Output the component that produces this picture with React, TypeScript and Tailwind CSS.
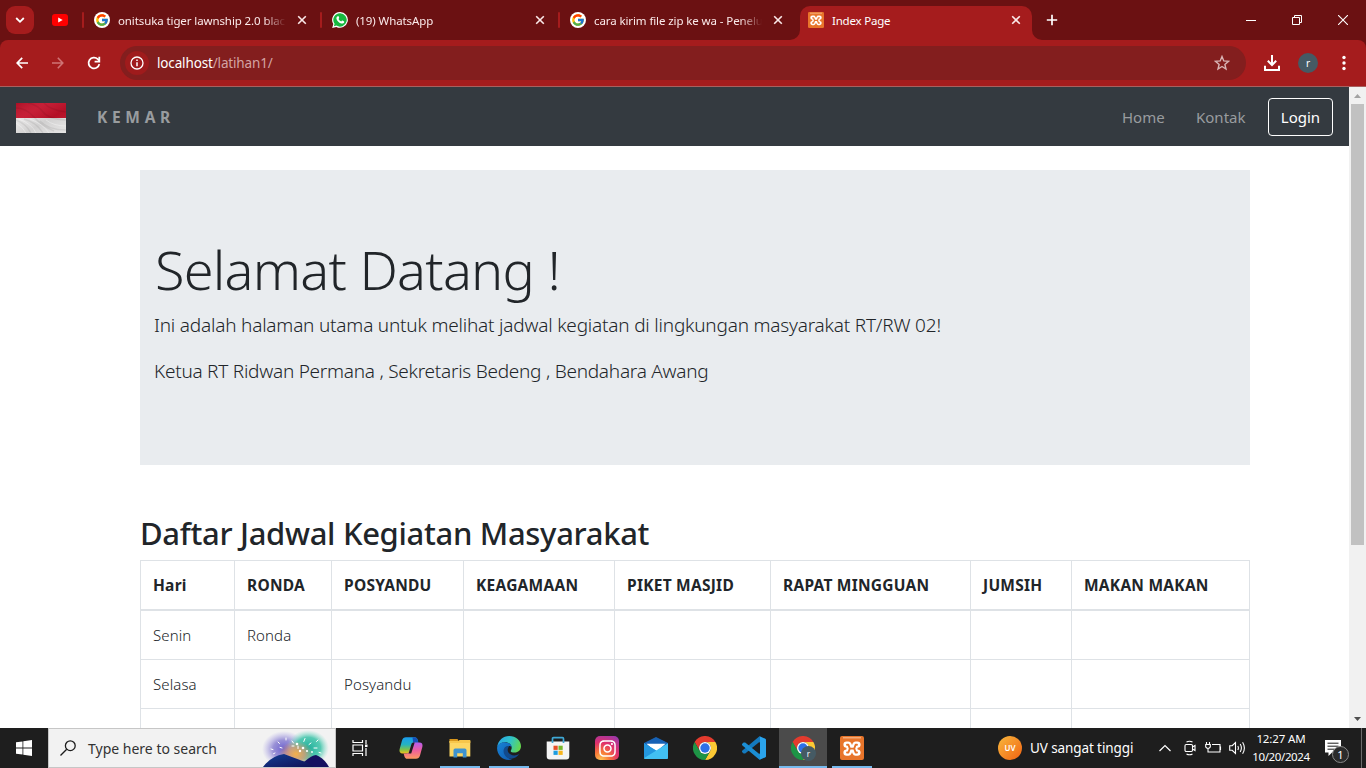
import React from "react";
import { FcGoogle } from "react-icons/fc";
import { FaInstagram } from "react-icons/fa";

const GoogleIcon = () => (
  <span className="flex size-4 shrink-0 items-center justify-center rounded-full bg-white">
    <FcGoogle className="size-[14px]" />
  </span>
);

const WhatsAppIcon = () => (
  <svg viewBox="0 0 16 16" className="size-4 shrink-0">
    <path d="M8.100 0A7.900 7.900 0 1 1 4.300 14.900L.2 16l1.100-4A7.900 7.900 0 0 1 8.100 0Z" fill="#fff" />
    <path d="M8.100 1.200A6.700 6.700 0 1 1 4.500 13.600L1.900 14.300l.7-2.500A6.700 6.700 0 0 1 8.100 1.200Z" fill="#17b83f" />
    <path d="M5.700 4.200c.6-.3.9 0 1.100.6l.4 1c.1.400-.3.800-.7 1.200.6 1.200 1.500 2 2.800 2.500.4-.4.7-1.100 1.200-.9l1.300.6c.5.300.5.600.3 1.200-.4.900-1.600 1.400-2.600 1.100C7 10.800 5.200 9 4.500 6.900c-.3-1 .3-2.300 1.200-2.700Z" fill="#fff" />
  </svg>
);

const XamppIcon = ({ small }: { small?: boolean }) => (
  <svg viewBox="0 0 24 24" className={small ? "size-4 shrink-0" : "size-6 shrink-0"}>
    <rect width="24" height="24" rx="2" fill="#e8752b" />
    <path d="M3 1.800h18" stroke="#f6b98c" strokeWidth="1.200" />
    <g fill="none" strokeLinecap="round" strokeLinejoin="round">
      <path d="M6.600 8.600h1.800l1.600 4-1.600 4H6.600M17.400 8.600h-1.800l-1.600 4 1.600 4h1.800M10 12.600h4" stroke="#fff" strokeWidth="6.400" />
      <path d="M7 8.700h1.400l1.400 3.900-1.400 3.900H7M17 8.700h-1.400l-1.400 3.900 1.400 3.900H17M9.800 12.600h4.400" stroke="#e8752b" strokeWidth="1.900" />
    </g>
  </svg>
);

const Close = () => (
  <svg viewBox="0 0 10 10" className="size-[10px] shrink-0" fill="none" stroke="#fbe9e9" strokeWidth="1.6">
    <path d="M1.2 1.2l7.6 7.6M8.8 1.2L1.2 8.8" />
  </svg>
);

const TabDivider = () => <span className="h-4 w-[2px] shrink-0 rounded bg-[#a51c1d]" />;

const Chrome = () => (
  <svg viewBox="0 0 48 48" className="size-6">
    <path d="M24 12H44.8A24 24 0 0 0 3.2 12L13.6 30A12 12 0 0 1 24 12Z" fill="#e33b2e" />
    <path d="M44.8 12A24 24 0 0 1 24 48L34.4 30A12 12 0 0 0 24 12Z" fill="#fcc934" />
    <path d="M3.2 12A24 24 0 0 0 24 48L34.4 30A12 12 0 0 1 13.6 30Z" fill="#1e9446" />
    <circle cx="24" cy="24" r="12" fill="#fff" />
    <circle cx="24" cy="24" r="9.4" fill="#2c70e8" />
  </svg>
);

const Copilot = () => (
  <svg viewBox="0 0 24 24" className="size-6">
    <defs>
      <linearGradient id="cpA" x1="0" y1="0" x2="0" y2="1">
        <stop offset="0" stopColor="#1a9df0" />
        <stop offset=".45" stopColor="#25b3c0" />
        <stop offset=".75" stopColor="#7cc24c" />
        <stop offset="1" stopColor="#f2c21a" />
      </linearGradient>
      <linearGradient id="cpB" x1="0" y1="0" x2="0" y2="1">
        <stop offset="0" stopColor="#b55cf0" />
        <stop offset=".5" stopColor="#f0609b" />
        <stop offset="1" stopColor="#ff9a5e" />
      </linearGradient>
    </defs>
    <path d="M7 1.2h8.6c1.7 0 2.6 1.1 3 2.6l.8 2.7h-2.6c-1.7 0-2.5.8-3 2.3l-2 6.3c-.5 1.6-1.4 2.4-3 2.4H3.600c-2.400 0-3.600-1.600-3-4.200L3 4.500C3.700 2.300 5 1.200 7 1.200Z" fill="url(#cpA)" />
    <path d="M13.500 1.200h2.100c1.700 0 2.600 1.100 3 2.600l.8 2.700h-2.600c-1.200 0-2 .5-2.500 1.300Z" fill="#1650b8" />
    <path d="M17 22.800H8.400c-1.700 0-2.600-1.100-3-2.600l-.8-2.700h2.600c1.700 0 2.500-.8 3-2.300l2-6.300c.5-1.600 1.400-2.400 3-2.400h5.200c2.400 0 3.600 1.600 3 4.200L21 19.500c-.7 2.200-2 3.300-4 3.300Z" fill="url(#cpB)" />
    <path d="M12.600 7.600 14 6.500h1.700l-3.500 11h-2.900c.5-.6.800-1.300 1-2.300Z" fill="#1e1e1e" />
  </svg>
);

const Explorer = () => (
  <svg viewBox="0 0 24 24" className="size-6">
    <path d="M1.500 3h8l1.500 2.500H1.500Z" fill="#d9971c" />
    <path d="M1.500 5h20.800v15.500H1.500Z" fill="#fdd663" />
    <path d="M1.500 5h9l1-1h10.800v3H1.500Z" fill="#f7c64b" />
    <path d="M5.500 21.500v-7.300q0-1.700 1.700-1.700h9.600q1.700 0 1.700 1.700v7.300h-3.700v-4.300h-5.600v4.300Z" fill="#3f93cf" />
  </svg>
);

const Edge = () => (
  <svg viewBox="0 0 24 24" className="size-6">
    <defs>
      <linearGradient id="egT" x1="0" y1=".3" x2="1" y2=".6">
        <stop offset="0" stopColor="#2aa7e6" />
        <stop offset=".5" stopColor="#2fc3c9" />
        <stop offset="1" stopColor="#66d84b" />
      </linearGradient>
      <linearGradient id="egB" x1="0" y1="0" x2="1" y2="1">
        <stop offset="0" stopColor="#1784d8" />
        <stop offset="1" stopColor="#1159ad" />
      </linearGradient>
    </defs>
    <path d="M.2 11C1 4.500 6 0 12.200 0 19 0 24 4.800 24 10.300c0 3.800-2.900 6.300-6.300 6.300-2.500 0-4-.8-4-1.700 0-.7 1-1.300 1-3.200C14.700 8.500 11.500 6.300 8 6.300 4.600 6.300 1.600 8 .2 11Z" fill="url(#egT)" />
    <path d="M.1 12C.3 8.500 3.600 6.200 7.500 6.200c4 0 7.100 2.300 7.200 5.200-1-1.300-2-1.600-3.300-1.400-3.400.7-4.600 4-3.400 7.200 1.200 3.300 4 5.900 7.200 6.300C7 25.800-.1 19.600.1 12Z" fill="url(#egB)" />
    <path d="M8.600 10.700c-2.700 2-2.700 6.100-.2 9.200 3.300 4 9.600 4.100 13.900-1.800-4 2.300-9.200 1.500-11-1.800-1.100-2-.8-4.200.8-6.100-1.300-.6-2.400-.2-3.500.5Z" fill="#124a8c" />
  </svg>
);

const Store = () => (
  <svg viewBox="0 0 24 24" className="size-6">
    <path d="M.7 5.500h22.600v15q0 3-3 3H3.700q-3 0-3-3Z" fill="#f4f4f4" />
    <path d="M6.500 7V2.800Q6.500 1.700 7.600 1.700h8.800q1.100 0 1.100 1.100V7" fill="none" stroke="#3fa9d6" strokeWidth="1.700" />
    <path d="M7.500 9.700h4.200v4.200H7.500Z" fill="#e64f27" />
    <path d="M12.500 9.700h4.200v4.200h-4.200Z" fill="#77b82a" />
    <path d="M7.500 14.700h4.200v4.200H7.500Z" fill="#1e9de0" />
    <path d="M12.500 14.700h4.200v4.200h-4.200Z" fill="#f8b51c" />
  </svg>
);

const Mail = () => (
  <svg viewBox="0 0 24 24" className="size-6">
    <path d="M0 7 12 1l12 6v6H0Z" fill="#1762b5" />
    <path d="M2.500 7.700h19L12 16Z" fill="#fff" />
    <path d="M0 7.200 24 21.500q0 1.500-1.500 1.500h-21Q0 23 0 21.500Z" fill="#2ba5e8" />
    <path d="M24 7.200 0 22q.3 1 1.500 1h21q1.500 0 1.500-1.500Z" fill="#42c0f2" />
    <path d="m0 7.200 12 7.200L0 22Z" fill="#2497df" />
  </svg>
);

const VsCode = () => (
  <svg viewBox="0 0 24 24" className="size-6">
    <path d="M17.500.3 24 3v4.500L17 6.300 3.200 17.500 1.600 17.600 0 16q-.2-.8.400-1.400Z" fill="#1479bd" />
    <path d="M17.500 23.700 24 21v-4.500l-7 1.200L3.200 6.500 1.600 6.400 0 8q-.2.8.4 1.400Z" fill="#1b8ed4" />
    <path d="m17.500.3 5.400 2.500Q24 3.300 24 4.500v15q0 1.200-1.100 1.700l-5.400 2.500q.5-.4.500-1.400V1.700q0-1-.5-1.400Z" fill="#2ba4ec" />
  </svg>
);

const Fireworks = () => (
  <svg viewBox="0 0 68 38" className="h-[38px] w-[68px]">
    <defs>
      <radialGradient id="fwA"><stop offset="0" stopColor="#6b60d0" /><stop offset=".5" stopColor="#8379cf" stopOpacity=".8" /><stop offset="1" stopColor="#a79ee8" stopOpacity="0" /></radialGradient>
      <radialGradient id="fwB"><stop offset="0" stopColor="#1faf9c" /><stop offset=".6" stopColor="#45c6ac" stopOpacity=".9" /><stop offset="1" stopColor="#90dfcf" stopOpacity="0" /></radialGradient>
      <radialGradient id="fwC"><stop offset="0" stopColor="#f4b04a" /><stop offset=".5" stopColor="#d99b70" stopOpacity=".8" /><stop offset="1" stopColor="#d99b70" stopOpacity="0" /></radialGradient>
      <linearGradient id="fwM" x1="0" y1="0" x2="1" y2="1"><stop offset="0" stopColor="#123f94" /><stop offset="1" stopColor="#101055" /></linearGradient>
    </defs>
    <ellipse cx="22" cy="20" rx="22" ry="18" fill="url(#fwA)" />
    <ellipse cx="46" cy="19" rx="21" ry="18" fill="url(#fwB)" />
    <ellipse cx="34" cy="25" rx="17" ry="13" fill="url(#fwC)" />
    <path d="m9 20 2 .6M16 13l1.500 1.500M24 9v2M13 24l-1.500.7M20 19l-2-.6M30 12l1.500 2M43 9.500l-1.200 3M49 14l-2 1.500M55 19h-3M56 11l-1.500 1.500M59 24l-2-.6M36 17v2.500M30 17h2" stroke="#fff" strokeLinecap="round" />
    <g fill="#fff"><circle cx="35" cy="15" r="1.300" /><circle cx="41" cy="19" r="1.300" /><circle cx="45" cy="22" r="1.100" /><circle cx="38" cy="22" r="1.200" /><circle cx="50" cy="23" r=".9" /></g>
    <path d="M42 33q8-7 12-7 8 3 13 12H40Z" fill="#151060" />
    <path d="M1 38Q9 27 22 25q13 5 22 8l8 5Z" fill="url(#fwM)" />
  </svg>
);

const Flag = () => (
  <svg viewBox="0 0 50 30" className="h-[30px] w-[50px]" preserveAspectRatio="none">
    <defs>
      <linearGradient id="flG" x1="0" y1="0" x2="1" y2="1">
        <stop offset="0" stopColor="#000" stopOpacity=".12" />
        <stop offset=".3" stopColor="#fff" stopOpacity=".06" />
        <stop offset=".6" stopColor="#000" stopOpacity=".08" />
        <stop offset="1" stopColor="#fff" stopOpacity=".06" />
      </linearGradient>
    </defs>
    <path d="M0 0h50v15H0Z" fill="#c3112a" />
    <path d="M0 15h50v15H0Z" fill="#e4e3e3" />
    <path d="M0 0h50v30H0Z" fill="url(#flG)" />
    <g fill="none" stroke="#000" strokeOpacity=".07" strokeWidth="1.500">
      <path d="M0 5q10 0 18 9t20 14M12 0q10 2 15 9t23 8M28 0q6 7 22 9M0 17q10 4 15 13M8 16q12 3 19 14M24 18q8 9 26 9" />
    </g>
    <path d="M0 20q7 4 10 10M14 16q13 5 19 14M30 17q8 6 20 6M3 16q13 5 17 14" fill="none" stroke="#fff" strokeOpacity=".35" />
  </svg>
);

const Tab = ({ icon, label }: { icon: React.ReactNode; label: string }) => (
  <div className="flex h-4 w-[236px] shrink-0 items-center pl-[10px]">
    {icon}
    <span className="mt-px ml-2 w-[168px] shrink-0 overflow-hidden whitespace-nowrap [mask-image:linear-gradient(to_right,#000_146px,transparent_168px)] text-[11.5px] leading-4 tracking-[-0.1px] text-[#fbeaea]">
      {label}
    </span>
    <span className="ml-[11px] flex">
      <Close />
    </span>
  </div>
);

const columns = [
  { label: "Hari", w: "w-[94px]" },
  { label: "RONDA", w: "w-[97px]" },
  { label: "POSYANDU", w: "w-[132px]" },
  { label: "KEAGAMAAN", w: "w-[151px]" },
  { label: "PIKET MASJID", w: "w-[156px]" },
  { label: "RAPAT MINGGUAN", w: "w-[200px]" },
  { label: "JUMSIH", w: "w-[101px]" },
  { label: "MAKAN MAKAN", w: "w-[178px]" },
];
const rows = [
  ["Senin", "Ronda", "", "", "", "", "", ""],
  ["Selasa", "", "Posyandu", "", "", "", "", ""],
  ["Rabu", "", "", "", "", "", "", ""],
];

const Slot = ({ children, state }: { children: React.ReactNode; state?: "open" | "active" }) => (
  <div className={state === "active" ? "mr-px flex h-10 w-12 shrink-0 flex-col items-center bg-[#4b4b4b] pt-2" : "mr-px flex h-10 w-12 shrink-0 flex-col items-center pt-2"}>
    {children}
    {state && <span className={state === "active" ? "mt-[6px] h-[2px] w-12 bg-[#76b9ed]" : "mt-[6px] h-[2px] w-10 bg-[#76b9ed]"} />}
  </div>
);

export default function App() {
  return (
    <div className="flex h-[768px] w-[1366px] flex-col overflow-hidden bg-white font-['Noto_Sans','Open_Sans',sans-serif] text-[#212529]">
      <div className="flex h-10 shrink-0 items-center bg-[#6b1112]">
        <div className="ml-[6px] flex size-7 shrink-0 items-center justify-center rounded-[9px] bg-[#a51c1d]">
          <svg viewBox="0 0 10 10" className="size-[10px]" fill="none" stroke="#fff" strokeWidth="1.800"><path d="m1.200 3 3.800 3.800L8.800 3" /></svg>
        </div>
        <svg viewBox="0 0 16 12" className="ml-[18px] h-3 w-4 shrink-0"><rect width="16" height="12" rx="3" fill="#f00" /><path d="M6.200 3.400v5.200L10.700 6Z" fill="#fff" /></svg>
        <div className="ml-[14px] flex items-center">
          <TabDivider />
          <Tab icon={<GoogleIcon />} label="onitsuka tiger lawnship 2.0 black" />
          <TabDivider />
          <Tab icon={<WhatsAppIcon />} label="(19) WhatsApp" />
          <TabDivider />
          <Tab icon={<GoogleIcon />} label="cara kirim file zip ke wa - Penelusuran" />
        </div>
        <svg viewBox="0 0 10 10" className="ml-[-6px] size-[10px] shrink-0 self-end"><path d="M10 0v10H0A10 10 0 0 0 10 0Z" fill="#a51c1d" /></svg>
        <div className="flex h-[34px] w-[232px] shrink-0 items-center self-end rounded-t-[10px] bg-[#a51c1d] pb-[6px] pl-2">
          <XamppIcon small />
          <span className="mt-px ml-2 w-[179px] text-[11.5px] leading-4 tracking-[-0.2px] text-white">Index Page</span>
          <Close />
        </div>
        <svg viewBox="0 0 10 10" className="size-[10px] shrink-0 self-end"><path d="M0 0v10h10A10 10 0 0 1 0 0Z" fill="#a51c1d" /></svg>
        <svg viewBox="0 0 12 12" className="ml-1 size-3 shrink-0" fill="none" stroke="#fff" strokeWidth="1.700"><path d="M6 .8v10.400M.8 6h10.400" /></svg>
        <div className="ml-auto flex shrink-0">
          <span className="flex w-[46px] justify-center"><svg viewBox="0 0 10 10" className="size-[10px]" stroke="#fff"><path d="M0 5.500h10" /></svg></span>
          <span className="flex w-[46px] justify-center"><svg viewBox="0 0 10 10" className="size-[10px]" fill="none" stroke="#fff"><path d="M.5 2.500h7v7h-7ZM2.500 2.500v-2h7v7h-2" /></svg></span>
          <span className="flex w-[46px] justify-center"><svg viewBox="0 0 10 10" className="size-[10px]" fill="none" stroke="#fff" strokeWidth="1.100"><path d="m0 0 10 10M10 0 0 10" /></svg></span>
        </div>
      </div>

      <div className="h-[47px] shrink-0 bg-[#6b1112]">
        <div className="flex h-[47px] items-center rounded-t-[8px] border-b border-[#a8605f] bg-[#a51c1d]">
          <svg viewBox="0 0 12 12" className="ml-4 size-3" fill="none" stroke="#fff" strokeWidth="1.700"><path d="M12 6H1.200M6.200.8 1.200 6l5 5.200" /></svg>
          <svg viewBox="0 0 12 12" className="ml-6 size-3" fill="none" stroke="#cf7475" strokeWidth="1.600"><path d="M0 6h10.800M5.800.8l5 5.200-5 5.200" /></svg>
          <svg viewBox="0 0 14 14" className="ml-[23px] size-[14px]" fill="none" stroke="#fff" strokeWidth="1.800"><path d="M12.300 8.100A5.400 5.400 0 1 1 10.800 3.200L12.200 4.700" /><path d="M12.300.8v4.800H7.600" /></svg>
          <div className="ml-[19px] flex h-[34px] w-[1126px] items-center rounded-full bg-[#831e1e]">
            <span className="ml-[5px] flex size-6 items-center justify-center rounded-full bg-[#9f1b1c]">
              <svg viewBox="0 0 14 14" className="size-[14px]" fill="none" stroke="#fff" strokeWidth="1.300"><circle cx="7" cy="7" r="6" /><path d="M7 6.200v4M7 3.600v1.400" strokeWidth="1.500" /></svg>
            </span>
            <span className="ml-2 text-[13.5px] leading-5 tracking-[-0.15px] text-white">localhost<span className="text-[#d3a3a3]">/latihan1/</span></span>
            <svg viewBox="0 0 16 16" className="mr-4 ml-auto size-4" fill="none" stroke="#d9b4b4" strokeWidth="1.400"><path d="m8 1.500 1.800 4.400 4.700.4-3.600 3.100 1.100 4.600L8 11.500 4 14l1.100-4.600L1.500 6.300l4.700-.4Z" /></svg>
          </div>
          <svg viewBox="0 0 16 16" className="ml-[18px] size-4" fill="none" stroke="#fff" strokeWidth="2"><path d="M8 0v9.500M3.800 5.800 8 10l4.200-4.200M1 10.800V15h14v-4.200" /></svg>
          <span className="ml-[18px] flex size-5 items-center justify-center rounded-full bg-[#455a64] text-[10px] leading-none text-white">r</span>
          <svg viewBox="0 0 4 16" className="ml-6 h-4 w-1" fill="#fff"><circle cx="2" cy="2.500" r="1.700" /><circle cx="2" cy="8" r="1.700" /><circle cx="2" cy="13.500" r="1.700" /></svg>
        </div>
      </div>

      <div className="flex h-[641px] shrink-0">
        <div className="h-[641px] w-[1349px] overflow-hidden">
          <nav className="flex h-[59px] items-center bg-[#343a40] pr-4 pl-4 text-[15px]">
            <span className="mt-[3px]"><Flag /></span>
            <span className="mt-px ml-[31px] text-[15.500px] leading-6 font-bold tracking-[4.700px] text-[#999c9f]">KEMAR</span>
            <span className="mt-px ml-auto w-[74px] leading-6 text-[#999c9f]">Home</span>
            <span className="mt-px w-[72px] leading-6 text-[#999c9f]">Kontak</span>
            <span className="mt-px flex h-[38px] w-[65px] items-center justify-center rounded-[4px] border border-white text-white">Login</span>
          </nav>
          <main className="ml-[140px] w-[1110px] pt-6">
            <section className="h-[295px] bg-[#e9ecef] pt-16 pl-[14px]">
              <h1 className="h-[80px] pl-px text-[54px] leading-[71px] font-[260] tracking-[-0.75px] whitespace-nowrap">Selamat Datang !</h1>
              <p className="h-[46px] text-[19px] leading-[23px] font-[270] tracking-[-0.2px] whitespace-nowrap">Ini adalah halaman utama untuk melihat jadwal kegiatan di lingkungan masyarakat RT/RW 02!</p>
              <p className="text-[19px] leading-[23px] font-[270] tracking-[-0.25px] whitespace-nowrap">Ketua RT Ridwan Permana , Sekretaris Bedeng , Bendahara Awang</p>
            </section>
            <h2 className="mt-[47px] h-12 text-[31px] leading-[42px] font-medium tracking-[-0.32px] whitespace-nowrap">Daftar Jadwal Kegiatan Masyarakat</h2>
            <table className="w-[1110px] table-fixed border-collapse text-left text-[15px] leading-6">
              <thead>
                <tr className="h-[49px]">
                  {columns.map((c) => (
                    <th key={c.label} className={`${c.w} border border-b-2 border-[#dee2e6] px-3 py-0 text-[15.500px] font-bold tracking-[0.25px] whitespace-nowrap`}>{c.label}</th>
                  ))}
                </tr>
              </thead>
              <tbody>
                {rows.map((r, n) => (
                  <tr key={r[0]} className={n === 0 ? "h-[50px]" : "h-[49px]"}>
                    {r.map((c, i) => (
                      <td key={i} className={n === 0 ? "border border-[#dee2e6] px-3 pt-px pb-0 font-[340] tracking-[0.1px]" : "border border-[#dee2e6] px-3 pt-0 pb-px font-[340] tracking-[0.1px]"}>{c}</td>
                    ))}
                  </tr>
                ))}
              </tbody>
            </table>
          </main>
        </div>
        <div className="flex h-[641px] w-[17px] flex-col items-center bg-[#f1f1f1]">
          <svg viewBox="0 0 17 17" className="h-[17px] w-[17px] shrink-0"><path d="m5 11 3.500-4 3.500 4Z" fill="#a3a3a3" /></svg>
          <span className="h-[441px] w-[13px] bg-[#c1c1c1]" />
          <svg viewBox="0 0 17 17" className="mt-auto h-[17px] w-[17px] shrink-0"><path d="m5 6 3.500 4L12 6Z" fill="#505050" /></svg>
        </div>
      </div>

      <div className="flex h-10 shrink-0 bg-[#1e1e1e] text-white">
        <div className="flex w-12 items-center justify-center">
          <svg viewBox="0 0 16 16" className="size-4" fill="#fff"><path d="M0 2.300 6.500 1.400v6.200H0ZM7.300 1.300 16 0v7.600H7.300ZM0 8.400h6.500v6.200L0 13.700ZM7.300 8.400H16V16l-8.700-1.300Z" /></svg>
        </div>
        <div className="flex h-10 w-72 items-end border border-[#c6c6c6] bg-[#f2f2f2]">
          <svg viewBox="0 0 16 16" className="mb-[11px] ml-[11px] size-4" fill="none" stroke="#1c1c1c" strokeWidth="1.300"><circle cx="10.300" cy="5.700" r="4.900" /><path d="M6.700 9.300.5 15.500" /></svg>
          <span className="mb-2 ml-3 w-[174px] text-[14px] leading-5 text-[#333]">Type here to search</span>
          <Fireworks />
        </div>
        <Slot>
          <svg viewBox="0 0 16 16" className="mt-1 size-4" fill="none" stroke="#fff" strokeWidth="1.200"><path d="M1 0v2.500h9.500V0M1 16v-2.500h9.500V16M1 5h9.500v6H1ZM14 0v4M14 8v8" /><path d="M13 4.500h2.500v2.500H13Z" fill="#fff" stroke="none" /></svg>
        </Slot>
        <div className="ml-[2px] flex">
          <Slot><Copilot /></Slot>
          <Slot state="open"><Explorer /></Slot>
          <Slot state="open"><Edge /></Slot>
          <Slot><Store /></Slot>
          <Slot>
            <span className="flex size-6 items-center justify-center rounded-[5px] bg-[radial-gradient(circle_at_25%_100%,#fdc454_0%,#f77737_28%,#e1306c_58%,#8a3ab9_100%)]"><FaInstagram className="size-[19px] text-white" /></span>
          </Slot>
          <Slot><Mail /></Slot>
          <Slot><Chrome /></Slot>
          <Slot><VsCode /></Slot>
          <Slot state="active">
            <span className="relative size-6"><Chrome /><span className="absolute top-[10px] left-[10px] flex size-[15px] items-center justify-center rounded-full bg-[#455a64] text-[8px] leading-none">r</span></span>
          </Slot>
          <Slot state="open"><XamppIcon /></Slot>
        </div>
        <div className="ml-auto flex items-center">
          <span className="flex size-6 items-center justify-center rounded-full bg-gradient-to-br from-[#f6b73c] to-[#f0600f] text-[8px] font-semibold">UV</span>
          <span className="ml-2 w-[129px] text-[13.5px] tracking-[-0.1px] whitespace-nowrap">UV sangat tinggi</span>
          <svg viewBox="0 0 12 8" className="h-2 w-3" fill="none" stroke="#fff" strokeWidth="1.200"><path d="m.5 7 5.500-5.500L11.500 7" /></svg>
          <svg viewBox="0 0 12 16" className="ml-[13px] h-4 w-3" fill="none" stroke="#fff" strokeWidth="1.100"><rect x="1" y="4.500" width="7.500" height="7" rx="1.200" /><path d="M8.500 7 11 5.500v5L8.500 9M2.500 2q3-1.600 6 0M2.500 14q3 1.600 6 0" /></svg>
          <svg viewBox="0 0 17 12" className="ml-[9px] h-3 w-[17px]" fill="none" stroke="#fff" strokeWidth="1.100"><path d="M7 2.500h8v7.500H5M15.500 4.500v3.500M1.500 0v2.500M4.500 0v2.500M.7 2.500h4.600V5L4 6.300H2L.7 5ZM3 6.300V10h2" /></svg>
          <svg viewBox="0 0 17 14" className="ml-[7px] h-[14px] w-[17px]" fill="none" stroke="#fff" strokeWidth="1.100"><path d="M.7 4.700h2.500L6.500 1.500v11L3.200 9.300H.7ZM8.800 5q1.200 2 0 4M11.200 3q2.400 4 0 8M13.600 1.200q3.600 5.800 0 11.600" /></svg>
          <div className="flex w-[70px] flex-col items-center text-[11.500px] leading-[18px] whitespace-nowrap">
            <span className="tracking-[-0.12px]">12:27 AM</span>
            <span className="tracking-[-0.38px]">10/20/2024</span>
          </div>
          <div className="relative ml-[5px] h-10 w-10">
            <svg viewBox="0 0 16 16" className="absolute top-3 left-1 size-4"><path d="M0 0h16v12.500H7L3.500 16v-3.500H0Z" fill="#fff" /><path d="M2.500 3.200h11M2.500 6.200h11M2.500 9.200h7" stroke="#1e1e1e" /></svg>
            <span className="absolute top-[18px] left-[11px] flex size-[17px] items-center justify-center rounded-full border border-[#8a8a8a] bg-[#2b2b2b] text-[11px] leading-none">1</span>
          </div>
          <span className="mr-1 h-10 w-px bg-[#6b6b6b]" />
        </div>
      </div>
    </div>
  );
}
